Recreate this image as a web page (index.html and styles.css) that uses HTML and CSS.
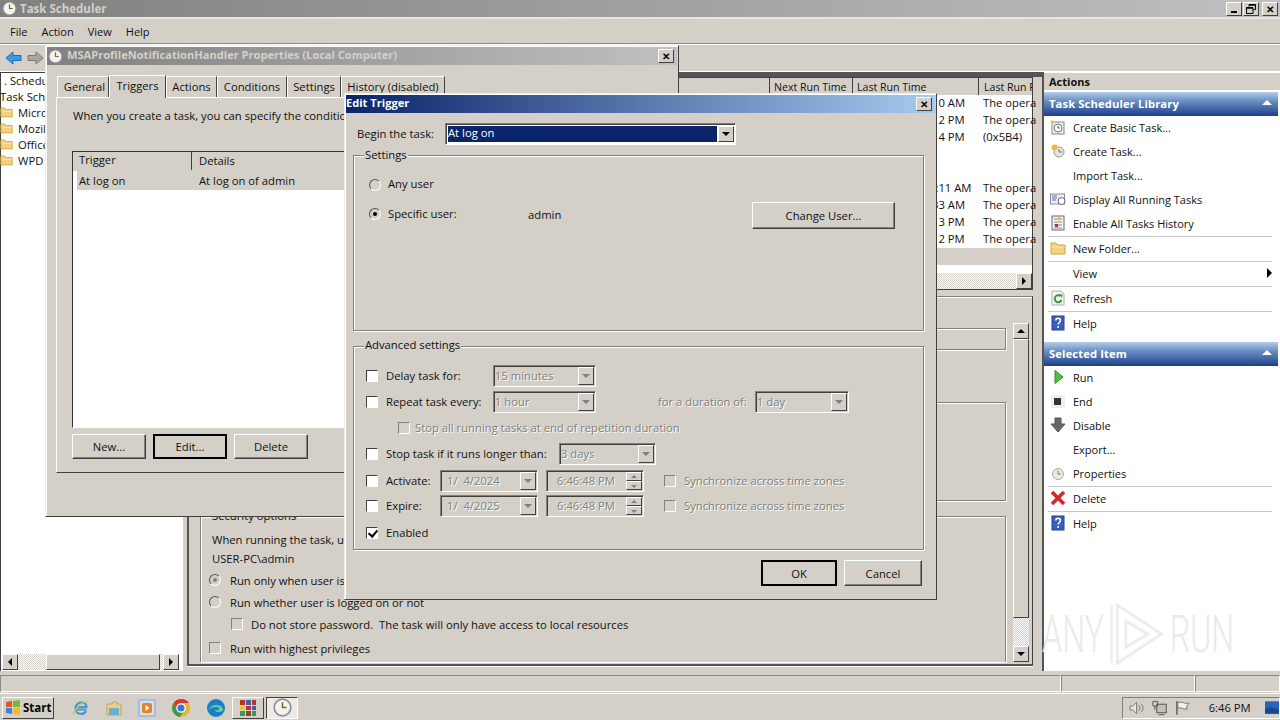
FILE: index.html
```html
<!DOCTYPE html>
<html lang="en">

<head>
  <meta charset="UTF-8">
  <title>Task Scheduler</title>
  <link rel="stylesheet" href="styles.css">
</head>

<body>
  <svg class="defs" width="0" height="0">
    <symbol id="clock" viewBox="0 0 16 16">
      <circle cx="8" cy="8" r="7" fill="#f4f2ea" stroke="#8a8f9c" stroke-width="1.4"/>
      <path d="M8 3.500V8h3.500" fill="none" stroke="#7a6a3a" stroke-width="1.3"/>
    </symbol>
    <symbol id="folder" viewBox="0 0 16 16">
      <path d="M1 3h5l1.500 2H15v9H1z" fill="#f3d27a" stroke="#c9a443"/>
      <path d="M1.500 7H14.500" stroke="#fbeab4"/>
    </symbol>
    <symbol id="help" viewBox="0 0 16 16">
      <rect x="2" y="1" width="12" height="14" fill="#3a5fc0" stroke="#23408c"/>
      <path d="M5.800 5.500c0-3 4.600-3 4.600 0 0 2-2.300 2-2.300 4" fill="none" stroke="#fff" stroke-width="1.500"/>
      <rect x="7.300" y="11" width="1.700" height="1.800" fill="#fff"/>
    </symbol>
  </svg>

  <div class="app">
    <div class="titlebar">
      <svg class="title-icon"><use href="#clock"/></svg>
      <span class="title-text">Task Scheduler</span>
      <div class="win-btns">
        <span class="win-btn"><i class="g-min"></i></span>
        <span class="win-btn"><svg width="10" height="10" viewBox="0 0 10 10"><path d="M3 2.500V.500h6.500v5H7.500M.500 3.500h6.500v6H.500z" fill="none" stroke="#000"/><path d="M3 1h6.500M.500 4h6.500" stroke="#000" stroke-width="1.500"/></svg></span>
        <span class="win-btn win-btn-x">✕</span>
      </div>
    </div>

    <div class="menubar">
      <span>File</span><span>Action</span><span>View</span><span>Help</span>
    </div>

    <div class="toolbar">
      <svg width="17" height="16" viewBox="0 0 17 16"><path d="M1 8l7-6v3.500h8v5H8V14z" fill="#3b9be0" stroke="#1f6fb0"/></svg>
      <svg width="17" height="16" viewBox="0 0 17 16"><path d="M16 8L9 2v3.500H1v5h8V14z" fill="#a8a69e" stroke="#7c7a72"/></svg>
    </div>

    <div class="panes">
      <div class="tree">
        <div class="tree-list">
          <div class="tree-row tree-top">. Scheduler</div>
          <div class="tree-row tree-lib">Task Sche</div>
          <div class="tree-row"><svg class="folder-icon"><use href="#folder"/></svg>Micro</div>
          <div class="tree-row"><svg class="folder-icon"><use href="#folder"/></svg>Mozill</div>
          <div class="tree-row"><svg class="folder-icon"><use href="#folder"/></svg>Office</div>
          <div class="tree-row"><svg class="folder-icon"><use href="#folder"/></svg>WPD</div>
        </div>
        <div class="hscroll">
          <span class="sb-btn"><i class="arr arr-l"></i></span>
          <span class="sb-track sb-track-a"></span>
          <span class="sb-thumb"></span>
          <span class="sb-track"></span>
          <span class="sb-btn"><i class="arr arr-r"></i></span>
        </div>
      </div>

      <div class="middle">
        <div class="tasks">
          <div class="tasks-head">
            <span class="th th-name"></span>
            <span class="th th-next">Next Run Time</span>
            <span class="th th-last">Last Run Time</span>
            <span class="th th-res">Last Run R</span>
          </div>
          <div class="tasks-rows">
            <div class="task-row"><span class="c-last">1/4/2024 6:46:10 AM</span><span class="c-res">The opera</span></div>
            <div class="task-row"><span class="c-last">1/3/2024 1:42:12 PM</span><span class="c-res">The opera</span></div>
            <div class="task-row"><span class="c-last">1/3/2024 1:42:14 PM</span><span class="c-res">(0x5B4)</span></div>
            <div class="task-row"></div>
            <div class="task-row"></div>
            <div class="task-row"><span class="c-last">1/4/2024 10:31:11 AM</span><span class="c-res">The opera</span></div>
            <div class="task-row"><span class="c-last">1/4/2024 6:46:33 AM</span><span class="c-res">The opera</span></div>
            <div class="task-row"><span class="c-last">1/3/2024 1:42:13 PM</span><span class="c-res">The opera</span></div>
            <div class="task-row"><span class="c-last">1/3/2024 1:42:12 PM</span><span class="c-res">The opera</span></div>
            <div class="task-row task-sel"></div>
          </div>
          <div class="hscroll tasks-scroll">
            <span class="sb-track sb-fill"></span>
            <span class="sb-btn"><i class="arr arr-r"></i></span>
          </div>
        </div>

        <div class="detail">
          <div class="detail-body">
            <div class="detail-groups">
              <div class="etched d-one"></div>
              <div class="etched d-two"></div>
              <div class="etched d-three">
                <span class="legend legend-sec">Security options</span>
                <div class="sec-row sec-text">When running the task, use the following user account:</div>
                <div class="sec-row sec-text">USER-PC\admin</div>
                <div class="sec-row sec-opt"><span class="radio radio-dis on"></span>Run only when user is logged on</div>
                <div class="sec-row sec-opt"><span class="radio radio-dis"></span>Run whether user is logged on or not</div>
                <div class="sec-row sec-opt sec-indent"><span class="check"></span>Do not store password.&nbsp; The task will only have access to local resources</div>
                <div class="sec-row sec-opt sec-last"><span class="check"></span>Run with highest privileges</div>
              </div>
            </div>
            <div class="vscroll">
              <span class="sb-btn"><i class="arr arr-u"></i></span>
              <span class="sb-thumb"></span>
              <span class="sb-track"></span>
              <span class="sb-btn"><i class="arr arr-d"></i></span>
            </div>
          </div>
        </div>
      </div>

      <div class="actions">
        <div class="actions-head">Actions</div>
        <div class="act-bar">Task Scheduler Library<i class="collapse"></i></div>
        <div class="act-item">
          <svg viewBox="0 0 16 16"><rect x="2" y="3" width="12" height="12" fill="#eee" stroke="#888"/><circle cx="8" cy="9" r="4" fill="#fff" stroke="#777"/><path d="M8 6.500V9h2" fill="none" stroke="#555"/><path d="M1 1l3 1 1 2-3-.500z" fill="#f0c040"/></svg>
          Create Basic Task...</div>
        <div class="act-item">
          <svg viewBox="0 0 16 16"><circle cx="9" cy="9" r="5" fill="#e8e6da" stroke="#9a9a8a"/><path d="M9 6v3h3" fill="none" stroke="#776"/><circle cx="4.500" cy="4.500" r="3" fill="#f2b63c"/></svg>
          Create Task...</div>
        <div class="act-item"><span class="act-blank"></span>Import Task...</div>
        <div class="act-item">
          <svg viewBox="0 0 16 16"><rect x="0.500" y="3" width="14" height="10" fill="#eef" stroke="#8a8a9a"/><path d="M2 5h5M2 7h5M2 9h4" stroke="#57a"/><circle cx="11.500" cy="10" r="3.500" fill="#fff" stroke="#666"/></svg>
          Display All Running Tasks</div>
        <div class="act-item">
          <svg viewBox="0 0 16 16"><rect x="2" y="1" width="12" height="14" fill="#f4f4ee" stroke="#667"/><path d="M4 4h8M4 7h8M4 10h8M4 13h8" stroke="#889"/><path d="M9 1l3 4H7z" fill="#f0c020"/><rect x="5" y="9" width="3" height="3" fill="#b03030"/></svg>
          Enable All Tasks History</div>
        <div class="act-sep"></div>
        <div class="act-item"><svg><use href="#folder"/></svg>New Folder...</div>
        <div class="act-sep"></div>
        <div class="act-item"><span class="act-blank"></span>View<i class="submenu"></i></div>
        <div class="act-sep"></div>
        <div class="act-item">
          <svg viewBox="0 0 16 16"><path d="M2 1h9l3 3v11H2z" fill="#f6f6f0" stroke="#aab"/><path d="M11.500 10a3.500 3.500 0 1 1-1-4" fill="none" stroke="#2f9a3c" stroke-width="2"/><path d="M9 4l3.500.500L12 8z" fill="#2f9a3c"/></svg>
          Refresh</div>
        <div class="act-sep"></div>
        <div class="act-item"><svg><use href="#help"/></svg>Help</div>

        <div class="act-bar act-bar-two">Selected Item<i class="collapse"></i></div>
        <div class="act-item"><svg viewBox="0 0 16 16"><path d="M5 1.500l8 6.500-8 6.500z" fill="#4fc04a" stroke="#2f8f2c"/></svg>Run</div>
        <div class="act-item"><svg viewBox="0 0 16 16"><rect x="1" y="2" width="14" height="13" fill="#eee"/><rect x="4" y="5" width="7" height="7" fill="#333"/></svg>End</div>
        <div class="act-item"><svg viewBox="0 0 16 16"><path d="M5 1h6v6h4l-7 8-7-8h4z" fill="#666" stroke="#555"/></svg>Disable</div>
        <div class="act-item"><span class="act-blank"></span>Export...</div>
        <div class="act-item"><svg viewBox="0 0 16 16"><circle cx="8" cy="9" r="5.500" fill="#ecebe2" stroke="#aaa"/><path d="M8 5.500V9h3" fill="none" stroke="#8a7a4a"/></svg>Properties</div>
        <div class="act-sep"></div>
        <div class="act-item"><svg viewBox="0 0 16 16"><path d="M2 2l12 12M14 2L2 14" stroke="#d8262c" stroke-width="3.600"/></svg>Delete</div>
        <div class="act-sep"></div>
        <div class="act-item"><svg><use href="#help"/></svg>Help</div>

        <div class="watermark">
          <span>ANY</span>
          <svg width="90" height="62" viewBox="0 0 66 62" preserveAspectRatio="none"><path d="M3 2v58M10 2l52 29-52 29zM20 18l26 13-26 13z" fill="none" stroke="#ececec" stroke-width="3"/></svg>
          <span>RUN</span>
        </div>
      </div>
    </div>

    <div class="statusbar">
      <span class="status-cell status-wide"></span>
      <span class="status-cell status-mid"></span>
      <span class="status-cell status-end"></span>
    </div>
  </div>

  <div class="taskbar">
    <div class="start">
      <svg width="16" height="15" viewBox="0 0 16 15"><path d="M1 2l6-1v6H1z" fill="#e2552b"/><path d="M8 1l7-1v7H8z" fill="#79b83a"/><path d="M1 8h6v6l-6-1z" fill="#3a86d8"/><path d="M8 8h7v7l-7-1z" fill="#efbb2e"/></svg>
      Start
    </div>
    <div class="quick">
      <svg width="18" height="18" viewBox="0 0 18 18"><path d="M14.500 10.500H4M4 8h10.500c0-3-2.500-4.500-5.500-4.500S3.500 6 3.500 9.500 6 15 9 15c2.500 0 4-1 5-3" fill="none" stroke="#3d9ad8" stroke-width="2.200"/><path d="M1 16C3 9 10 3 16 2" fill="none" stroke="#e3c24a" stroke-width="1.200"/></svg>
      <svg width="18" height="18" viewBox="0 0 18 18"><path d="M2 5h5l1-2h4v2h4v11H2z" fill="#e9d28e" stroke="#b8a468"/><rect x="4" y="9" width="10" height="7" fill="#6ab0c8"/></svg>
      <svg width="18" height="18" viewBox="0 0 18 18"><rect x="1" y="1" width="16" height="16" fill="#cfe0f2" stroke="#7fa5cf"/><rect x="4" y="4" width="10" height="10" rx="2" fill="#e8821e"/><path d="M7.500 6l4 3-4 3z" fill="#fff"/></svg>
      <svg width="20" height="20" viewBox="0 0 20 20"><circle cx="10" cy="10" r="9" fill="#e4b52a"/><path d="M10 1a9 9 0 0 0-7.800 4.500L6 12l4-7h8a9 9 0 0 0-8-4z" fill="#d8392c"/><path d="M2.200 5.500A9 9 0 0 0 9 19l4-7H6z" fill="#3b9c48"/><circle cx="10" cy="10" r="4.200" fill="#3a78d8" stroke="#fff" stroke-width="1.300"/></svg>
      <svg width="20" height="20" viewBox="0 0 20 20"><circle cx="10" cy="10" r="9" fill="#1c7fc4"/><path d="M3 12c1-6 12-7 14-1 .6 2-2 3-5 3-2 0-3-1-3-2 3 1 5 0 4-2-2-2-8-1-10 2z" fill="#5fd0a8"/></svg>
    </div>
    <div class="task-btn">
      <svg width="18" height="18" viewBox="0 0 18 18"><rect x="1" y="1" width="5" height="5" fill="#b5352c"/><rect x="7" y="1" width="5" height="5" fill="#3c5fb0"/><rect x="13" y="1" width="4" height="5" fill="#b5352c"/><rect x="1" y="7" width="5" height="4" fill="#e3c43a"/><rect x="7" y="7" width="5" height="4" fill="#b5352c"/><rect x="13" y="7" width="4" height="4" fill="#3c5fb0"/><rect x="1" y="12" width="5" height="5" fill="#3f9a48"/><rect x="7" y="12" width="5" height="5" fill="#8a4a2a"/><rect x="13" y="12" width="4" height="5" fill="#3f9a48"/></svg>
    </div>
    <div class="task-btn task-btn-on"><svg width="19" height="19"><use href="#clock"/></svg></div>
    <div class="tray">
      <svg width="16" height="14" viewBox="0 0 16 14"><path d="M1 5h3l4-4v12L4 9H1z" fill="#e8e6de" stroke="#77756e"/><path d="M10 4c2 2 2 4 0 6M12.500 2.500c3 3 3 6 0 9" fill="none" stroke="#77756e"/></svg>
      <svg width="16" height="16" viewBox="0 0 16 16"><rect x="5" y="4" width="10" height="9" fill="#c2bfb4" stroke="#55534c"/><path d="M1 1h5v5H1zM3 6v4M7 15h6" fill="none" stroke="#55534c"/></svg>
      <svg width="16" height="16" viewBox="0 0 16 16"><path d="M2 1v14" stroke="#55534c" stroke-width="1.400"/><path d="M3 2h5l2 1h5l-3 3 1 3H9L7 8H3z" fill="#f2f1ec" stroke="#77756e"/></svg>
      <span class="clock">6:46 PM</span>
      <svg width="15" height="13" viewBox="0 0 15 13"><rect width="15" height="13" fill="#2a64b8"/><path d="M0 8c5-2 10-2 15 1v4H0z" fill="#174a92"/></svg>
    </div>
  </div>

  <!-- task properties, sits behind edit trigger -->
  <div class="dialog props">
    <div class="dlg-title dlg-title-off">
      <svg class="title-icon"><use href="#clock"/></svg>
      <span class="dlg-title-text">MSAProfileNotificationHandler Properties (Local Computer)</span>
      <span class="win-btn win-btn-x">✕</span>
    </div>
    <div class="tabs">
      <span class="tab tab-general">General</span>
      <span class="tab tab-on">Triggers</span>
      <span class="tab tab-actions">Actions</span>
      <span class="tab tab-cond">Conditions</span>
      <span class="tab tab-set">Settings</span>
      <span class="tab tab-hist">History (disabled)</span>
    </div>
    <div class="tab-panel">
      <p class="tab-intro">When you create a task, you can specify the conditions that will trigger the task.</p>
      <div class="trigger-list">
        <div class="trigger-head"><span class="trigger-col">Trigger</span><span class="trigger-detail">Details</span></div>
        <div class="trigger-row"><span class="trigger-col">At log on</span><span>At log on of admin</span></div>
      </div>
      <div class="trigger-btns">
        <span class="btn btn-small">New...</span>
        <span class="btn btn-small btn-def">Edit...</span>
        <span class="btn btn-small">Delete</span>
      </div>
    </div>
  </div>

  <div class="dialog edit">
    <div class="dlg-title">
      <span class="dlg-title-text">Edit Trigger</span>
      <span class="win-btn win-btn-x">✕</span>
    </div>
    <div class="edit-body">
      <div class="begin-row">
        <span class="begin-label">Begin the task:</span>
        <div class="combo combo-begin"><span class="combo-val combo-sel">At log on</span><span class="combo-arrow"><i class="arr arr-d"></i></span></div>
      </div>

      <div class="etched group group-settings">
        <span class="legend">Settings</span>
        <div class="set-row set-any"><span class="radio"></span><span class="any-label">Any user</span></div>
        <div class="set-row set-spec">
          <span class="radio on"></span>
          <span class="spec-label">Specific user:</span>
          <span class="spec-name">admin</span>
          <span class="btn btn-change">Change User...</span>
        </div>
      </div>

      <div class="etched group group-adv">
        <span class="legend">Advanced settings</span>
        <div class="adv-row adv-first">
          <span class="check"></span><span class="adv-label">Delay task for:</span>
          <div class="combo combo-off combo-w103"><span class="combo-val">15 minutes</span><span class="combo-arrow"><i class="arr arr-d arr-off"></i></span></div>
        </div>
        <div class="adv-row">
          <span class="check"></span><span class="adv-label">Repeat task every:</span>
          <div class="combo combo-off combo-w103"><span class="combo-val">1 hour</span><span class="combo-arrow"><i class="arr arr-d arr-off"></i></span></div>
          <span class="dis-text duration-label">for a duration of:</span>
          <div class="combo combo-off combo-w94"><span class="combo-val">1 day</span><span class="combo-arrow"><i class="arr arr-d arr-off"></i></span></div>
        </div>
        <div class="adv-row">
          <span class="check check-off stop-all"></span><span class="dis-text">Stop all running tasks at end of repetition duration</span>
        </div>
        <div class="adv-row">
          <span class="check"></span><span class="adv-label adv-label-long">Stop task if it runs longer than:</span>
          <div class="combo combo-off combo-w97"><span class="combo-val">3 days</span><span class="combo-arrow"><i class="arr arr-d arr-off"></i></span></div>
        </div>
        <div class="adv-row adv-gap5">
          <span class="check"></span><span class="adv-label adv-label-date">Activate:</span>
          <div class="combo combo-off combo-date"><span class="combo-val">1/&nbsp; 4/2024</span><span class="combo-arrow"><i class="arr arr-d arr-off"></i></span></div>
          <div class="combo combo-off combo-date combo-time"><span class="combo-val">6:46:48 PM</span><span class="spin"><span class="spin-btn"><i class="arr arr-u arr-off"></i></span><span class="spin-btn"><i class="arr arr-d arr-off"></i></span></span></div>
          <span class="check check-off sync"></span><span class="dis-text">Synchronize across time zones</span>
        </div>
        <div class="adv-row adv-gap3">
          <span class="check"></span><span class="adv-label adv-label-date">Expire:</span>
          <div class="combo combo-off combo-date"><span class="combo-val">1/&nbsp; 4/2025</span><span class="combo-arrow"><i class="arr arr-d arr-off"></i></span></div>
          <div class="combo combo-off combo-date combo-time"><span class="combo-val">6:46:48 PM</span><span class="spin"><span class="spin-btn"><i class="arr arr-u arr-off"></i></span><span class="spin-btn"><i class="arr arr-d arr-off"></i></span></span></div>
          <span class="check check-off sync"></span><span class="dis-text">Synchronize across time zones</span>
        </div>
        <div class="adv-row adv-gap5">
          <span class="check on"></span><span class="adv-label">Enabled</span>
        </div>
      </div>

      <div class="edit-btns">
        <span class="btn btn-ok btn-def">OK</span>
        <span class="btn btn-cancel">Cancel</span>
      </div>
    </div>
  </div>
</body>

</html>
```

FILE: styles.css
```css
:root {
    --face: #d4d0c8;
    --shade: #808080;
    --dark: #404040;
}

* {
    box-sizing: border-box;
}

html,
body {
    height: 100%;
    margin: 0;
    padding: 0;
}

body {
    position: relative;
    display: flex;
    flex-direction: column;
    width: 1280px;
    height: 720px;
    overflow: hidden;
    background-color: var(--face);
    font-family: "Open Sans", "Liberation Sans", sans-serif;
    font-size: 11.25px;
    color: #111;
}

.defs {
    position: absolute;
}

i {
    display: block;
}

.app {
    display: flex;
    flex-direction: column;
    height: 693px;
}

/* title bars */
.titlebar {
    display: flex;
    align-items: center;
    height: 19px;
    padding: 0 2px;
    background: linear-gradient(to right, #808080, #c0c0c0);
    border-bottom: 2px solid #e8e6e0;
}

.title-icon {
    flex: none;
    width: 15px;
    height: 15px;
}

.title-text {
    margin-left: 3px;
    font-size: 11.5px;
    font-weight: 700;
    color: var(--face);
}

.win-btns {
    display: flex;
    margin-left: auto;
    gap: 1px;
}

.win-btn {
    display: flex;
    flex: none;
    align-items: center;
    justify-content: center;
    width: 16px;
    height: 14px;
    background-color: var(--face);
    border: 1px solid;
    border-color: #fff var(--dark) var(--dark) #fff;
    font-size: 10px;
    font-weight: 700;
    line-height: 1;
    color: #000;
}

.win-btn + .win-btn-x {
    margin-left: 2px;
}

.g-min {
    width: 6px;
    height: 2px;
    margin-top: 7px;
    background-color: #000;
}

/* menu and toolbar */
.menubar {
    display: flex;
    align-items: center;
    gap: 14px;
    height: 25px;
    padding-left: 10px;
    font-size: 11px;
    border-bottom: 1px solid #8a877f;
}

.toolbar {
    display: flex;
    align-items: center;
    gap: 5px;
    height: 27px;
    padding: 0 0 0 5px;
    border-top: 1px solid #fff;
}

.panes {
    display: grid;
    grid-template-columns: 183px 849px 248px;
    column-gap: 0;
    height: 600px;
    border-top: 1px solid #fff;
    background: linear-gradient(to bottom, #555 0, #555 5px, var(--face) 5px);
}

/* left tree */
.tree {
    display: flex;
    flex-direction: column;
    padding-left: 1px;
    background-color: #fff;
    border-left: 1px solid var(--dark);
}

.tree-list {
    flex: 1;
    margin-left: -2px;
    box-shadow: inset 0 1px 0 var(--dark);
}

.tree-row {
    display: flex;
    align-items: center;
    height: 16px;
    white-space: nowrap;
    overflow: hidden;
}

.tree-top {
    padding-left: 4px;
}

.tree-lib {
    padding-left: 0;
}

.folder-icon {
    flex: none;
    width: 13px;
    height: 14px;
    margin-right: 5px;
}

/* scrollbars */
.hscroll {
    display: flex;
    flex: none;
    height: 16px;
    margin-right: 4px;
    margin-bottom: 1px;
}

.sb-btn {
    display: flex;
    flex: none;
    align-items: center;
    justify-content: center;
    width: 16px;
    height: 16px;
    background-color: var(--face);
    border: 1px solid;
    border-color: #fff var(--dark) var(--dark) #fff;
}

.sb-track {
    flex: 1;
    background-color: var(--face);
    background-image: repeating-conic-gradient(#fff 0 25%, var(--face) 0 50%);
    background-size: 2px 2px;
}

.sb-track-a {
    flex: none;
    width: 28px;
}

.sb-fill {
    flex: 1;
}

.sb-thumb {
    flex: none;
    width: 114px;
    background-color: var(--face);
    border: 1px solid;
    border-color: #fff var(--dark) var(--dark) #fff;
}

.arr {
    width: 0;
    height: 0;
    border: 4px solid transparent;
}

.arr-l {
    margin-left: -4px;
    border-right-color: #000;
}

.arr-r {
    margin-right: -4px;
    border-left-color: #000;
}

.arr-u {
    margin-top: -4px;
    border-bottom-color: #000;
}

.arr-d {
    margin-bottom: -4px;
    border-top-color: #000;
}

.arr-off {
    border-top-color: var(--shade);
}

.arr-u.arr-off {
    border-top-color: transparent;
    border-bottom-color: var(--shade);
}

/* middle column */
.middle {
    display: flex;
    flex-direction: column;
    margin-left: 4px;
    margin-right: -1px;
}

.tasks {
    display: flex;
    flex-direction: column;
    height: 213px;
    margin-top: 5px;
    background-color: #fff;
    border: 1px solid var(--dark);
    border-left-width: 2px;
}

.tasks-head {
    display: flex;
    flex: none;
    height: 17px;
    font-size: 10.6px;
    background-color: var(--face);
}

.th {
    display: flex;
    align-items: center;
    height: 17px;
    padding-left: 4px;
    border-left: 1px solid var(--dark);
    white-space: nowrap;
    overflow: hidden;
}

.th-name {
    width: 580px;
    border-left: 0;
}

.th-next {
    width: 83px;
}

.th-last {
    width: 126px;
}

.th-res {
    flex: 1;
    padding-left: 5px;
}

.tasks-rows {
    flex: 1;
}

.task-row {
    display: flex;
    height: 17px;
    padding-bottom: 2px;
    align-items: center;
    line-height: 15px;
}

.c-last {
    flex: none;
    width: 126px;
    margin-left: 668px;
    white-space: nowrap;
}

.c-res {
    white-space: nowrap;
}

.task-sel {
    background-color: var(--face);
}

.tasks-scroll {
    margin-right: 0;
    margin-bottom: 0;
}

.detail {
    flex: 1;
    margin-top: 6px;
    margin-bottom: 5px;
    border-top: 1px solid var(--shade);
    border-right: 1px solid var(--dark);
    border-bottom: 2px solid #555;
    border-left: 2px solid #555;
    box-shadow: inset 0 1px 0 #fff, 0 1px 0 #fff;
}

.detail-body {
    display: flex;
    height: 100%;
    padding: 24px 0 2px 11px;
}

.detail-groups {
    display: flex;
    flex-direction: column;
    width: 806px;
    margin-right: 7px;
}

.etched {
    position: relative;
    border: 1px solid var(--shade);
    box-shadow: 1px 1px 0 #fff, inset 1px 1px 0 #fff;
}

.d-one {
    flex: none;
    height: 22px;
    margin-top: 7px;
}

.d-two {
    flex: none;
    height: 99px;
    margin-top: 52px;
}

.d-three {
    flex: 1;
    margin-top: 15px;
    padding: 14px 0 0 8px;
    border-bottom: 0;
}

.legend {
    position: absolute;
    top: -10px;
    left: 10px;
    padding: 0 1px;
    background-color: var(--face);
    line-height: 17px;
}

.group-adv .legend {
    top: -11px;
}

.sec-row {
    display: flex;
    align-items: center;
    height: 19px;
    padding-bottom: 2px;
    white-space: nowrap;
}

.sec-text {
    padding-left: 3px;
}

.sec-opt {
    height: 20px;
    margin-top: 2px;
}

.sec-opt .radio,
.sec-opt .check {
    margin-right: 9px;
}

.sec-indent {
    padding-left: 22px;
}

.sec-indent .check {
    margin-right: 8px;
}

.sec-last {
    margin-top: 4px;
}

.vscroll {
    display: flex;
    flex-direction: column;
    width: 16px;
    margin-top: 2px;
}

.vscroll .sb-thumb {
    flex: 1;
    width: 16px;
}

.vscroll .sb-track {
    flex: none;
    height: 28px;
}

/* actions column */
.actions {
    position: relative;
    margin-left: 10px;
    padding-top: 1px;
    background-color: #fff;
    border-left: 2px solid #555;
    font-size: 11px;
}

.actions-head {
    display: flex;
    align-items: center;
    height: 17px;
    padding-left: 5px;
    background-color: var(--face);
    font-weight: 700;
}

.act-bar {
    display: flex;
    align-items: center;
    justify-content: space-between;
    width: 234px;
    height: 24px;
    margin-top: 2px;
    padding: 0 6px 2px 5px;
    background: linear-gradient(to bottom, #b4cdea, #6d93c6 35%, #1c3f88);
    font-size: 11.25px;
    font-weight: 700;
    letter-spacing: .1px;
    color: #fff;
}

.act-bar-two {
    margin-top: 6px;
}

.collapse {
    width: 0;
    height: 0;
    margin-top: -2px;
    border: 5px solid transparent;
    border-top-width: 0;
    border-bottom: 5px solid #fff;
}

.act-item {
    display: flex;
    align-items: center;
    width: 234px;
    height: 24px;
    padding: 0 6px 2px 6px;
    white-space: nowrap;
}

.act-item svg {
    flex: none;
    width: 16px;
    height: 16px;
    margin: 0 7px 0 0;
}

.act-blank {
    flex: none;
    width: 23px;
}

.submenu {
    width: 0;
    height: 0;
    margin-left: auto;
    border: 5px solid transparent;
    border-right-width: 0;
    border-left: 5px solid #000;
}

.act-sep {
    width: 224px;
    height: 1px;
    margin: 0 4px;
    background-color: #c8c8c8;
}

.watermark {
    position: absolute;
    top: 531px;
    left: -2px;
    display: flex;
    align-items: center;
    gap: 8px;
    font-family: "Roboto", sans-serif;
    font-size: 52px;
    font-weight: 300;
    color: #eaeaea;
    transform: scaleX(.62);
    transform-origin: left center;
}

/* status + taskbar */
.statusbar {
    display: flex;
    flex: none;
    height: 22px;
    padding: 3px 0 1px;
    border-top: 1px solid var(--face);
}

.status-cell {
    border: 1px solid;
    border-color: #8a877f #fff #fff #8a877f;
}

.status-wide {
    width: 1061px;
}

.status-mid {
    width: 134px;
}

.status-end {
    flex: 1;
}

.taskbar {
    display: flex;
    align-items: center;
    flex: none;
    height: 27px;
    padding: 1px 0 0 2px;
    background-color: var(--face);
    border-top: 1px solid #fff;
}

.start {
    display: flex;
    align-items: center;
    gap: 2px;
    width: 52px;
    height: 22px;
    padding-left: 2px;
    font-weight: 700;
    font-size: 11.5px;
    border: 1px solid;
    border-color: #fff var(--dark) var(--dark) #fff;
    color: #000;
}

.quick {
    display: flex;
    align-items: center;
    gap: 15px;
    width: 178px;
    padding-left: 18px;
}

.task-btn {
    display: flex;
    align-items: center;
    justify-content: center;
    width: 32px;
    height: 22px;
    margin-right: 2px;
    border: 1px solid;
    border-color: #fff var(--dark) var(--dark) #fff;
}

.task-btn-on {
    border-color: var(--dark) #fff #fff var(--dark);
    background-color: #eceae4;
}

.tray {
    display: flex;
    align-items: center;
    gap: 8px;
    width: 158px;
    height: 22px;
    margin-left: auto;
    padding-left: 6px;
    border: 1px solid;
    border-color: var(--shade) #fff #fff var(--shade);
}

.clock {
    margin-left: 10px;
    margin-right: 6px;
    white-space: nowrap;
}

/* dialogs */
.dialog {
    position: absolute;
    padding: 1px;
    background-color: var(--face);
    border: 1px solid;
    border-color: #efede8 var(--dark) var(--dark) #efede8;
    box-shadow: inset 1px 1px 0 #fff;
}

.props {
    top: 45px;
    left: 45px;
    width: 634px;
    height: 472px;
}

.edit {
    top: 93px;
    left: 344px;
    width: 593px;
    height: 507px;
}

.dlg-title {
    display: flex;
    align-items: center;
    justify-content: space-between;
    height: 18px;
    padding: 0 3px 0 0;
    background: linear-gradient(to right, #0a246a, #a6caf0);
}

.dlg-title-off {
    justify-content: flex-start;
    padding-left: 1px;
    background: linear-gradient(to right, #808080, #c0c0c0);
}

.dlg-title-off .win-btn {
    margin-left: auto;
}

.dlg-title-text {
    margin-bottom: 3px;
    font-size: 11.1px;
    font-weight: 700;
    color: #fff;
}

.dlg-title-off .dlg-title-text {
    margin-left: 4px;
    color: var(--face);
}

/* properties dialog */
.tabs {
    display: flex;
    align-items: flex-end;
    height: 32px;
    padding-left: 10px;
}

.tab {
    display: flex;
    align-items: center;
    justify-content: center;
    height: 21px;
    padding-bottom: 1px;
    border: 1px solid;
    border-color: #fff var(--dark) transparent #fff;
    border-bottom: 0;
    white-space: nowrap;
}

.tab-general {
    width: 52px;
    padding-left: 3px;
}

.tab-on {
    position: relative;
    z-index: 1;
    width: 57px;
    height: 23px;
    margin-bottom: -1px;
    padding-bottom: 3px;
    background-color: var(--face);
}

.tab-actions {
    width: 51px;
}

.tab-cond {
    width: 70px;
}

.tab-set {
    width: 54px;
}

.tab-hist {
    width: 104px;
}

.tab-panel {
    width: 612px;
    height: 376px;
    margin-left: 9px;
    padding: 0 15px;
    border: 1px solid;
    border-color: #fff var(--dark) var(--dark) #fff;
}

.tab-intro {
    height: 36px;
    margin: 0;
    padding: 10px 0 0 1px;
    line-height: 16px;
    white-space: nowrap;
}

.trigger-list {
    height: 277px;
    margin-top: 17px;
    background-color: #fff;
    border: 1px solid #333;
    border-right-color: #fff;
    border-bottom-color: #fff;
}

.trigger-head {
    display: flex;
    align-items: center;
    height: 19px;
    padding-bottom: 1px;
    background-color: var(--face);
}

.trigger-col {
    width: 118px;
    padding-left: 6px;
    line-height: 16px;
    margin-bottom: 2px;
}

.trigger-detail {
    padding-left: 7px;
    border-left: 1px solid var(--dark);
    line-height: 18px;
}

.trigger-row {
    display: flex;
    align-items: center;
    height: 19px;
    margin-left: 4px;
    background-color: var(--face);
}

.trigger-row .trigger-col {
    width: 122px;
    padding-left: 2px;
    margin-bottom: 0;
}

.trigger-btns {
    display: flex;
    gap: 7px;
    margin-top: 6px;
}

.btn {
    display: flex;
    align-items: center;
    justify-content: center;
    background-color: var(--face);
    border: 1px solid;
    border-color: #fff var(--dark) var(--dark) #fff;
    box-shadow: inset -1px -1px 0 var(--shade);
}

.btn-small {
    width: 74px;
    height: 25px;
}

.btn-def {
    border: 2px solid #000;
    box-shadow: none;
}

/* edit trigger dialog */
.edit-body {
    padding: 10px 11px 0 7px;
}

.begin-row {
    display: flex;
    align-items: center;
    height: 22px;
    padding-left: 4px;
}

.begin-label {
    width: 88px;
    margin-bottom: 2px;
}

.combo {
    display: flex;
    flex: none;
    align-items: stretch;
    height: 22px;
    padding: 1px;
    background-color: var(--face);
    border: 1px solid;
    border-color: var(--shade) #fff #fff var(--shade);
    box-shadow: inset 1px 1px 0 var(--dark);
}

.combo-begin {
    width: 291px;
    padding: 2px 1px 2px 2px;
    background-color: #fff;
}

.combo-val {
    flex: 1;
    padding-left: 0;
    line-height: 17px;
    color: var(--shade);
    text-shadow: 1px 1px 0 #fff;
    white-space: nowrap;
    overflow: hidden;
}

.combo-sel {
    line-height: 14px;
    background-color: #0a246a;
    color: #fff;
    text-shadow: none;
}

.combo-arrow {
    display: flex;
    flex: none;
    align-items: center;
    justify-content: center;
    width: 16px;
    margin-left: 1px;
    background-color: var(--face);
    border: 1px solid;
    border-color: #fff var(--dark) var(--dark) #fff;
}

.group {
    margin-top: 15px;
}

.group-settings {
    height: 176px;
    margin-top: 10px;
    padding: 19px 0 0 15px;
}

.set-row {
    display: flex;
    align-items: center;
}

.set-any {
    height: 19px;
    gap: 7px;
}

.any-label {
    margin-bottom: 2px;
}

.set-spec {
    height: 27px;
    margin-top: 8px;
}

.set-spec .radio {
    margin-bottom: 3px;
}

.spec-label {
    width: 140px;
    margin-left: 7px;
    margin-bottom: 4px;
}

.spec-name {
    width: 224px;
    margin-bottom: 2px;
}

.btn-change {
    width: 143px;
    height: 27px;
}

.radio {
    position: relative;
    flex: none;
    width: 12px;
    height: 12px;
    background-color: var(--face);
    border: 1px solid;
    border-color: #555 #fff #fff #555;
    border-radius: 50%;
}

.radio.on::after {
    content: "";
    position: absolute;
    top: 3px;
    left: 3px;
    width: 4px;
    height: 4px;
    background-color: #000;
    border-radius: 50%;
}

.radio-dis.on::after {
    background-color: var(--shade);
}

.group-adv {
    height: 204px;
    padding: 0 0 0 12px;
}

.adv-row {
    display: flex;
    align-items: center;
    height: 22px;
    margin-top: 4px;
    white-space: nowrap;
}

.adv-first {
    margin-top: 18px;
}

.adv-gap5 {
    margin-top: 5px;
}

.adv-gap3 {
    margin-top: 3px;
}

.check {
    position: relative;
    flex: none;
    width: 12px;
    height: 12px;
    background-color: #fff;
    border: 1px solid;
    border-color: #404040 #fff #fff #404040;
    box-shadow: 1px 1px 0 var(--face);
}

.check-off {
    background-color: var(--face);
    border-color: var(--shade) #fff #fff var(--shade);
}

.sec-opt .check {
    background-color: var(--face);
    border-color: var(--shade) #fff #fff var(--shade);
}

.check.on::after {
    content: "";
    position: absolute;
    top: 0;
    left: 3px;
    width: 4px;
    height: 7px;
    border: solid #000;
    border-width: 0 2px 2px 0;
    transform: rotate(40deg);
}

.adv-label {
    width: 107px;
    margin-left: 8px;
    margin-bottom: 2px;
}

.adv-label-long {
    width: 173px;
}

.adv-label-date {
    width: 54px;
}

.combo-w103 {
    width: 103px;
}

.combo-w94 {
    width: 94px;
}

.combo-w97 {
    width: 97px;
}

.combo-date {
    width: 98px;
}

.combo-date .combo-val {
    padding-left: 5px;
}

.combo-time {
    margin-left: 8px;
}

.combo-time .combo-val {
    padding-left: 9px;
}

.spin {
    display: flex;
    flex: none;
    flex-direction: column;
    width: 16px;
}

.spin-btn {
    display: flex;
    flex: 1;
    align-items: center;
    justify-content: center;
    border: 1px solid;
    border-color: #fff var(--dark) var(--dark) #fff;
}

.spin-btn .arr {
    border-width: 3px;
}

.dis-text {
    margin-bottom: 2px;
    color: var(--shade);
    text-shadow: 1px 1px 0 #fff;
}

.duration-label {
    width: 97px;
    margin-left: 62px;
}

.stop-all {
    margin-left: 32px;
    margin-right: 5px;
}

.sync {
    margin-left: 20px;
    margin-right: 8px;
}

.edit-btns {
    display: flex;
    justify-content: flex-end;
    gap: 7px;
    margin-top: 10px;
    margin-right: 2px;
}

.btn-ok {
    width: 76px;
    height: 26px;
}

.btn-cancel {
    width: 78px;
    height: 26px;
}
```
